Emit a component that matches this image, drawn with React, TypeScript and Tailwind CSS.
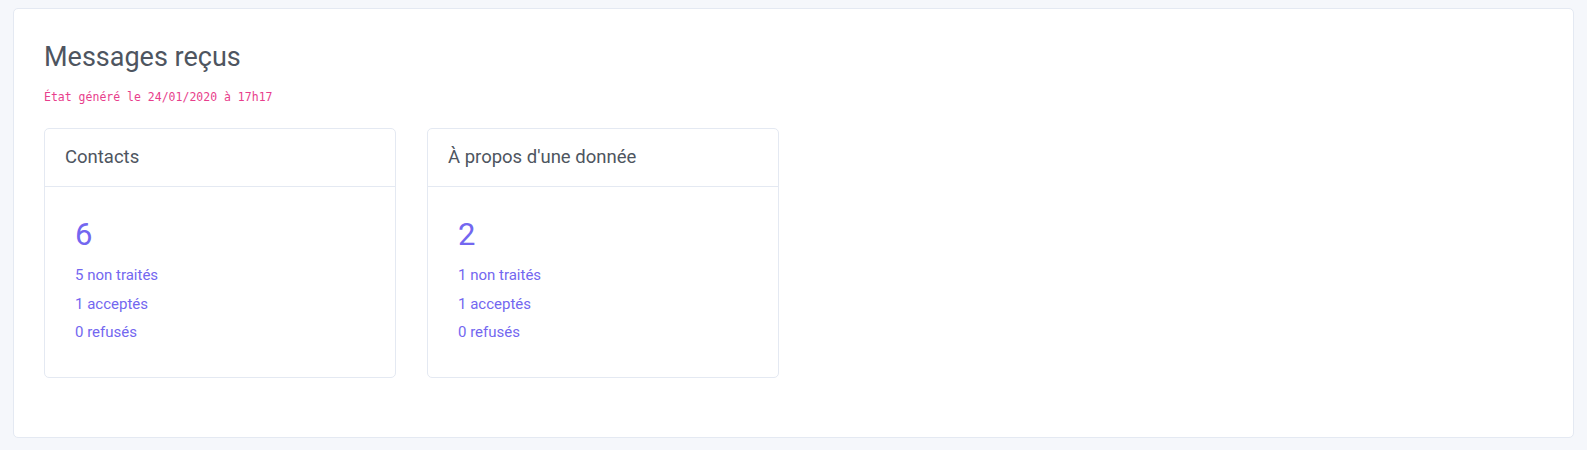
const CARDS = [
  { title: 'Contacts', total: 6, pending: 5, accepted: 1, refused: 0 },
  { title: "À propos d'une donnée", total: 2, pending: 1, accepted: 1, refused: 0 },
]

export default function App() {
  return (
    <div className="min-h-[450px] bg-[#f5f7fb] px-[13px] pt-[8px] pb-[12px] font-['Roboto',sans-serif]">
      <div className="h-[430px] rounded-[5px] border border-[#e4e9f2] bg-white px-[30px] pt-[32px]">
        <h1 className="text-[27px] leading-[33px] text-[#4e5560]">Messages reçus</h1>
        <div className="mt-[16px] font-['DejaVu_Sans_Mono',monospace] text-[11.5px] leading-[14px] text-[#e83e8c]">
          État généré le 24/01/2020 à 17h17
        </div>

        <div className="mt-[24px] flex gap-[31px]">
          {CARDS.map((c) => (
            <div
              key={c.title}
              className="h-[250px] w-[352px] rounded-[5px] border border-[#e4e9f2] bg-white"
            >
              <div className="flex h-[58px] items-center border-b border-[#e4e9f2] px-[20px] text-[18.5px] text-[#4e5560]">
                {c.title}
              </div>
              <div className="px-[30px] pt-[30px]">
                <div className="text-[31px] leading-[36px] text-[#7367f0]">{c.total}</div>
                <div className="mt-[13px] space-y-[9px] text-[15px] leading-[19.5px] text-[#7367f0]">
                  <div>{c.pending} non traités</div>
                  <div>{c.accepted} acceptés</div>
                  <div>{c.refused} refusés</div>
                </div>
              </div>
            </div>
          ))}
        </div>
      </div>
    </div>
  )
}
